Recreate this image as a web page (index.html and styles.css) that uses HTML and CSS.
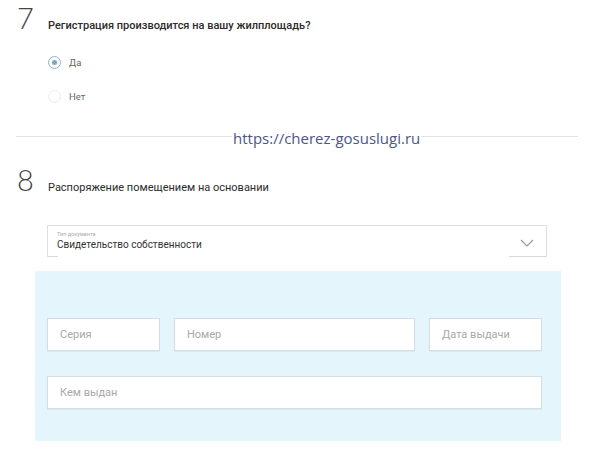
FILE: index.html
```html
<!DOCTYPE html>
<html lang="ru">
<head>
<meta charset="utf-8">
<link rel="stylesheet" href="styles.css">
</head>
<body>
<main class="page">
  <section class="block block-7">
    <div class="question">
      <span class="num">7</span>
      <span class="qtext strong">Регистрация производится на вашу жилплощадь?</span>
    </div>
    <div class="options">
      <label class="option"><span class="radio checked"></span><span class="opt-label">Да</span></label>
      <label class="option"><span class="radio"></span><span class="opt-label">Нет</span></label>
    </div>
  </section>

  <div class="divider">
    <span class="watermark">https://cherez-gosuslugi.ru</span>
  </div>

  <section class="block block-8">
    <div class="question">
      <span class="num">8</span>
      <span class="qtext">Распоряжение помещением на основании</span>
    </div>
    <div class="select">
      <div class="select-body">
        <span class="select-label">Тип документа</span>
        <span class="select-value">Свидетельство собственности</span>
      </div>
      <svg class="chevron" width="14" height="8" viewBox="0 0 14 8"><path d="M1 1 L7 7 L13 1" fill="none" stroke="#9a9a9a" stroke-width="1.2"/></svg>
    </div>
    <div class="panel">
      <div class="row row-3">
        <div class="field">Серия</div>
        <div class="field">Номер</div>
        <div class="field">Дата выдачи</div>
      </div>
      <div class="row">
        <div class="field">Кем выдан</div>
      </div>
    </div>
  </section>
</main>
</body>
</html>
```
FILE: styles.css
```css
* { box-sizing: border-box; }
html, body { margin: 0; padding: 0; background: #fff; }
body {
  font-family: "Roboto", "Noto Sans", sans-serif;
  color: #333;
  width: 600px;
  height: 455px;
  overflow: hidden;
}
.page { position: relative; }

.question {
  display: flex;
  align-items: baseline;
  padding-left: 17px;
}
.num {
  width: 31px;
  font-family: "Lato", "Open Sans", sans-serif;
  font-weight: 300;
  font-size: 29px;
  line-height: 32px;
  color: #444;
}
.qtext {
  font-size: 11px;
  color: #2b2b2b;
}
.qtext.strong { font-weight: 500; }

.block-7 { padding-top: 2px; }

.options {
  margin-top: 22px;
  padding-left: 48px;
  display: flex;
  flex-direction: column;
  gap: 21px;
}
.option {
  display: flex;
  align-items: center;
  gap: 8px;
  height: 13px;
}
.radio {
  width: 13px;
  height: 13px;
  border-radius: 50%;
  border: 1px solid #ececec;
  background: #fff;
  display: flex;
  align-items: center;
  justify-content: center;
}
.radio.checked {
  border: 1.5px solid #8fb7c6;
}
.radio.checked::after {
  content: "";
  width: 5px;
  height: 5px;
  border-radius: 50%;
  background: #7ea9ba;
}
.opt-label {
  font-size: 9.5px;
  color: #666;
}

.divider {
  position: relative;
  margin: 33px 22px 0 16px;
  border-top: 1px solid #e3e3e3;
  height: 0;
}
.watermark {
  position: absolute;
  left: 216px;
  top: -9px;
  background: #fff;
  padding: 0 1px;
  font-family: "Open Sans", sans-serif;
  font-size: 15px;
  line-height: 20px;
  color: #4b5687;
}

.block-8 { padding-top: 27px; }

.select {
  margin: 29px 53px 0 47px;
  height: 32px;
  border: 1px solid #dedede;
  border-bottom: none;
  background:
    linear-gradient(to right, #d8d8d8 10px, transparent 10px, transparent calc(100% - 37px), #d8d8d8 calc(100% - 37px)) left bottom / 100% 1px no-repeat,
    #fff;
  display: flex;
  align-items: center;
  justify-content: space-between;
  padding: 0 12px 0 9px;
}
.select-body {
  display: flex;
  flex-direction: column;
}
.select-label {
  font-size: 5.5px;
  color: #aaa;
  line-height: 7px;
}
.select-value {
  font-size: 10px;
  color: #333;
  line-height: 14px;
}
.chevron { margin-top: 2px; }

.panel {
  margin: 14px 39px 0 35px;
  background: #e4f5fb;
  padding: 47px 19px 32px 12px;
  display: flex;
  flex-direction: column;
  gap: 25px;
}
.row { display: grid; grid-template-columns: 1fr; }
.row-3 { grid-template-columns: 113px 1fr 113px; column-gap: 14px; }
.field {
  height: 33px;
  background: #fff;
  border: 1px solid #d3dde3;
  box-shadow: 0 1px 1px rgba(0,0,0,0.04);
  display: flex;
  align-items: center;
  padding-left: 12px;
  font-size: 11px;
  color: #a8a8a8;
}
```
